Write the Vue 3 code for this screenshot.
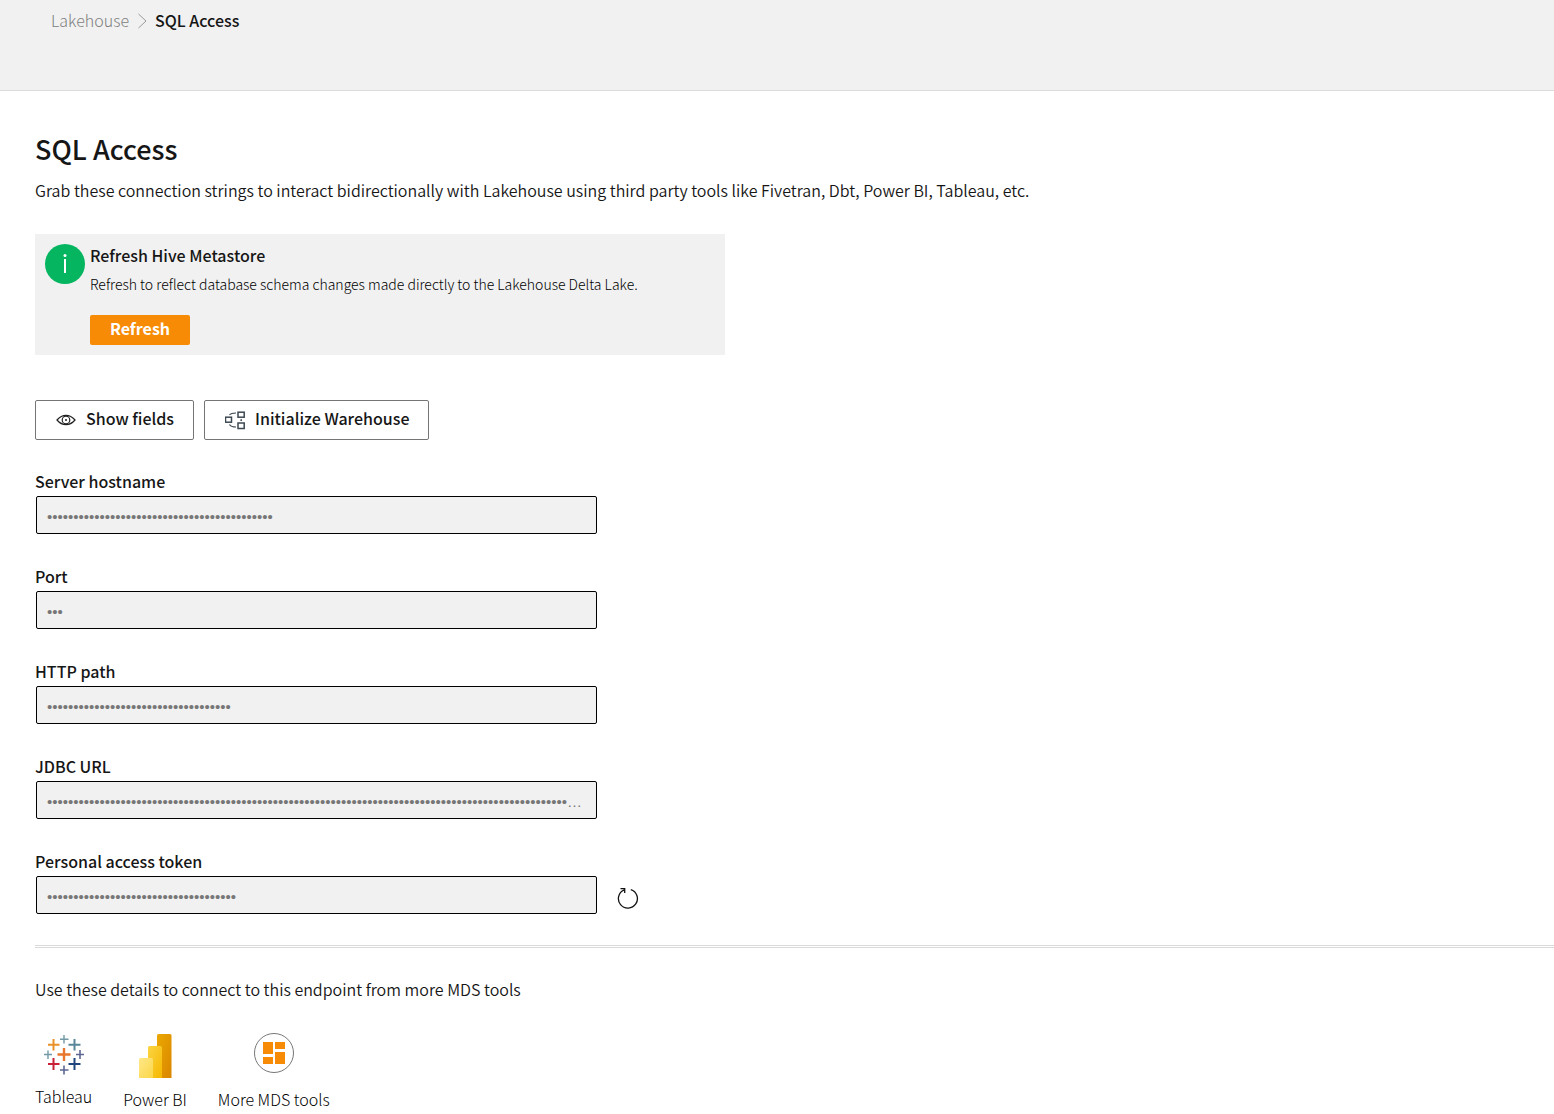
<script setup>
import { ref } from 'vue'

const dots = (n) => '•'.repeat(n)

const fields = ref([
  { id: 'hostname', label: 'Server hostname', value: dots(43) },
  { id: 'port', label: 'Port', value: dots(3) },
  { id: 'http-path', label: 'HTTP path', value: dots(35) },
  { id: 'jdbc-url', label: 'JDBC URL', value: dots(140) },
  { id: 'token', label: 'Personal access token', value: dots(36), renewable: true },
])
</script>

<template>
  <div class="page">
    <header class="topbar">
      <nav class="crumbs" aria-label="Breadcrumb">
        <a href="#" class="crumb-link">Lakehouse</a>
        <svg class="chevron" width="10" height="18" viewBox="0 0 10 18" fill="none" stroke="#9a9a9a" aria-hidden="true">
          <path d="M1.500 3 L9 10 L1.500 17" />
        </svg>
        <span class="crumb-current">SQL Access</span>
      </nav>
    </header>

    <main class="content">
      <h1>SQL Access</h1>
      <p class="lead">Grab these connection strings to interact bidirectionally with Lakehouse using third party tools like Fivetran, Dbt, Power BI, Tableau, etc.</p>

      <section class="notice">
        <svg class="info" width="40" height="40" viewBox="0 0 40 40" aria-hidden="true">
          <circle cx="20" cy="20" r="20" fill="#05b560" />
          <rect x="19" y="15" width="2" height="14" fill="#fff" />
          <circle cx="20" cy="11.500" r="1.500" fill="#fff" />
        </svg>
        <div class="notice-body">
          <h2>Refresh Hive Metastore</h2>
          <p>Refresh to reflect database schema changes made directly to the Lakehouse Delta Lake.</p>
          <button type="button" class="primary">Refresh</button>
        </div>
      </section>

      <div class="actions">
        <button type="button" class="outline">
          <svg width="20" height="20" viewBox="0 0 20 20" fill="none" stroke="#222" stroke-width="1.200" aria-hidden="true">
            <path d="M1 10 C4 6.500 7 5.300 10 5.300 C13 5.300 16 6.500 19 10 C16 13.500 13 14.700 10 14.700 C7 14.700 4 13.500 1 10 Z" />
            <circle cx="10" cy="10" r="3.800" />
            <circle cx="10" cy="10" r="1" fill="#222" stroke="none" />
          </svg>
          <span>Show fields</span>
        </button>
        <button type="button" class="outline">
          <svg width="20" height="20" viewBox="0 0 20 20" fill="none" stroke="#3c4850" stroke-width="1.500" aria-hidden="true">
            <rect x="0.500" y="7.200" width="6" height="5" />
            <rect x="13" y="2.200" width="6.200" height="5" />
            <rect x="13" y="13" width="6.200" height="5.500" />
            <path d="M4.500 5 C5.500 3.700 7 3 11 3 M4.500 14.500 C5.500 16.300 7 17 11 17" stroke-width="1.200" />
            <path d="M16.200 9.200 V11" />
          </svg>
          <span>Initialize Warehouse</span>
        </button>
      </div>

      <form class="fields" @submit.prevent>
        <div v-for="field in fields" :key="field.id" class="field">
          <label :for="field.id">{{ field.label }}</label>
          <div class="field-row">
            <input :id="field.id" type="text" readonly :value="field.value" />
            <button v-if="field.renewable" type="button" class="renew" aria-label="Regenerate token">
              <svg width="22" height="22" viewBox="0 0 22 22" fill="none" stroke="#111" stroke-width="1.300" aria-hidden="true">
                <path d="M13.800 2.600 A9.500 9.500 0 1 1 7.200 2.900" />
                <path d="M3.500 1.700 H7.700 V6" />
              </svg>
            </button>
          </div>
        </div>
      </form>

      <hr />

      <p class="hint">Use these details to connect to this endpoint from more MDS tools</p>

      <div class="tools">
        <a href="#" class="tool">
          <svg width="42" height="42" viewBox="0 0 42 42" fill="none" aria-hidden="true">
            <path d="M21 15 V28 M14.500 21.500 H27.500" stroke="#e8762d" stroke-width="2.400" />
            <path d="M10.500 6 V17.500 M5 11.700 H16.500" stroke="#eb9129" stroke-width="2" />
            <path d="M31.500 6 V17.500 M25.500 11.700 H37.500" stroke="#5b879b" stroke-width="2" />
            <path d="M10.500 25 V37 M5 31 H16.500" stroke="#c72037" stroke-width="2" />
            <path d="M31.500 25 V37 M25.500 31 H37.500" stroke="#1f457e" stroke-width="2" />
            <path d="M21 2 V10.500 M17 6.200 H25.500" stroke="#7199a6" stroke-width="1.400" />
            <path d="M21 32.500 V41.500 M17 37 H25.500" stroke="#5c6692" stroke-width="1.600" />
            <path d="M5 17.500 V26 M1 21.500 H9" stroke="#7199a6" stroke-width="1.400" />
            <path d="M37 17 V26 M33 21.500 H41" stroke="#5c6692" stroke-width="1.600" />
          </svg>
          <span>Tableau</span>
        </a>
        <a href="#" class="tool">
          <svg width="34" height="45" viewBox="0 0 34 45" aria-hidden="true">
            <defs>
              <linearGradient id="bar-back" x1="0" y1="0" x2="1" y2="1">
                <stop offset="0" stop-color="#eba800" />
                <stop offset="1" stop-color="#d98600" />
              </linearGradient>
              <linearGradient id="bar-mid" x1="0" y1="0" x2="1" y2="1">
                <stop offset="0" stop-color="#fbd443" />
                <stop offset="1" stop-color="#f5b800" />
              </linearGradient>
              <linearGradient id="bar-front" x1="0" y1="0" x2="1" y2="1">
                <stop offset="0" stop-color="#ffe788" />
                <stop offset="1" stop-color="#fbd748" />
              </linearGradient>
            </defs>
            <path d="M19 45 V2.500 Q19 1 20.500 1 H32 Q33.500 1 33.500 2.500 V45 Z" fill="url(#bar-back)" />
            <path d="M10 45 V14.500 Q10 13 11.500 13 H22.500 Q24 13 24 14.500 V45 Z" fill="url(#bar-mid)" />
            <path d="M1 45 V26.500 Q1 25 2.500 25 H13.500 Q15 25 15 26.500 V45 Z" fill="url(#bar-front)" />
          </svg>
          <span>Power BI</span>
        </a>
        <a href="#" class="tool">
          <svg width="42" height="45" viewBox="0 0 42 45" aria-hidden="true">
            <circle cx="21" cy="20" r="19.500" fill="#fff" stroke="#777" />
            <g fill="#f78b05">
              <rect x="10" y="9" width="10" height="12" />
              <rect x="22" y="9" width="10" height="7" />
              <rect x="10" y="24" width="10" height="7" />
              <rect x="22" y="19" width="10" height="12" />
            </g>
          </svg>
          <span>More MDS tools</span>
        </a>
      </div>
    </main>
  </div>
</template>

<style>
body {
  margin: 0;
  background: #fff;
}
</style>

<style scoped>
.page {
  color: #161616;
  font-family: 'Noto Sans CJK SC', 'Noto Sans', sans-serif;
  font-size: 16px;
  font-weight: 300;
  line-height: 24px;
}

.page button {
  font-family: inherit;
}

.topbar {
  box-sizing: border-box;
  min-height: 91px;
  padding: 8px 51px;
  background: #f1f1f1;
  border-bottom: 1px solid #dcdcdc;
}

.crumbs {
  display: flex;
  align-items: center;
  gap: 8px;
}

.crumb-link {
  color: #808080;
  text-decoration: none;
}

.crumb-current {
  font-weight: 500;
}

.content {
  padding: 38px 0 0 35px;
}

h1,
h2,
p {
  margin: 0;
}

h1 {
  font-size: 27px;
  font-weight: 500;
  line-height: 40px;
}

.lead {
  margin-top: 9px;
  font-weight: 350;
}

.notice {
  display: flex;
  gap: 5px;
  box-sizing: border-box;
  max-width: 690px;
  margin-top: 32px;
  padding: 10px;
  background: #f1f1f1;
}

.info {
  flex: none;
}

.notice-body h2 {
  font-size: 16px;
  font-weight: 500;
  line-height: 22px;
}

.notice-body p {
  margin-top: 6px;
  color: #000;
  font-size: 14px;
}

.primary {
  display: block;
  width: 100px;
  height: 30px;
  margin-top: 19px;
  padding: 0 0 4px;
  border: 0;
  border-radius: 2px;
  background: #f78b05;
  color: #fff;
  font-size: 16px;
  font-weight: 700;
  line-height: 24px;
}

.actions {
  display: flex;
  gap: 10px;
  margin-top: 45px;
}

.outline {
  display: flex;
  align-items: center;
  gap: 10px;
  height: 40px;
  padding: 0 19px 0 20px;
  border: 1px solid #757575;
  border-radius: 2px;
  background: #fff;
  color: #161616;
  font-size: 16px;
  font-weight: 500;
  line-height: 24px;
}

.outline span {
  padding-bottom: 4px;
}

.fields {
  display: flex;
  flex-direction: column;
  gap: 29px;
  margin-top: 29px;
}

.field label {
  display: block;
  font-weight: 500;
  line-height: 24px;
}

.field-row {
  display: flex;
  align-items: center;
  gap: 20px;
  margin: 3px 1px 1px;
}

.field input {
  box-sizing: border-box;
  width: 561px;
  height: 38px;
  padding: 2px 10px 0;
  border: 1px solid #000;
  border-radius: 2px;
  background: #f1f1f1;
  color: #777;
  font-family: 'Liberation Sans', sans-serif;
  font-size: 15px;
  text-overflow: ellipsis;
}

.renew {
  display: flex;
  padding: 6px 0 0;
  border: 0;
  background: none;
}

hr {
  margin: 30px 0 0;
  border: 0;
  border-top: 3px double #dadada;
}

.hint {
  margin-top: 29px;
  font-weight: 350;
}

.tools {
  display: flex;
  gap: 31px;
  margin-top: 32px;
}

.tool {
  display: flex;
  flex-direction: column;
  align-items: center;
  gap: 9px;
  color: #000;
  text-decoration: none;
}
</style>
